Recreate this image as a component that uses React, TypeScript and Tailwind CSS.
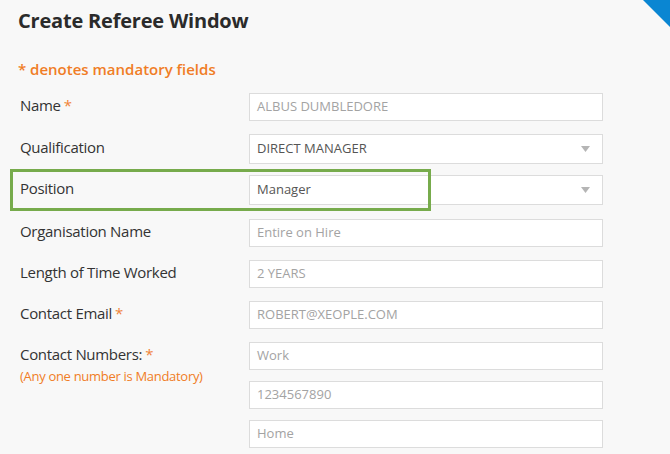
import React from "react";

const font = { fontFamily: '"Open Sans", "Liberation Sans", sans-serif' };

function Star() {
  return <span className="text-[#f0843a] ml-[3px]">*</span>;
}

function Field({ value, dark = false, select = false, tall = false }: { value: string; dark?: boolean; select?: boolean; tall?: boolean }) {
  return (
    <div
      className={`w-[354px] ${tall ? "h-[30px]" : "h-[28px]"} bg-white border border-[#dcdcdc] flex items-center justify-between pl-[7px] pr-[12px] text-[13px] ${dark ? "text-[#555555]" : "text-[#a3a3a3]"}`}
    >
      <span>{value}</span>
      {select && (
        <svg width="9" height="6" viewBox="0 0 9 6">
          <path d="M0 0 L9 0 L4.5 6 Z" fill="#b5b5b5" />
        </svg>
      )}
    </div>
  );
}

function Row({ label, star = false, children, className = "" }: { label: string; star?: boolean; children: React.ReactNode; className?: string }) {
  return (
    <div className={`flex items-center ${className}`}>
      <div className="w-[229px] text-[15px] text-[#333333] -mt-[4px] tracking-[-0.3px]">
        {label}
        {star && <Star />}
      </div>
      {children}
    </div>
  );
}

export default function App() {
  return (
    <div className="relative w-[670px] h-[454px] overflow-hidden bg-[#f8f8f8]" style={font}>
      <svg className="absolute top-0 right-0" width="28" height="28" viewBox="0 0 28 28">
        <path d="M1 0 L28 0 L28 27 Z" fill="#0a86d2" />
      </svg>
      <div className="pl-[18px] pt-[6px]">
        <h1 className="text-[20px] font-bold text-[#2b2b2b] leading-[30px] tracking-[-0.2px]">Create Referee Window</h1>
        <div className="mt-[22px] text-[15px] font-semibold text-[#f07d26] leading-[22px]">* denotes mandatory fields</div>
        <div className="pl-[2px] mt-[13px] flex flex-col">
          <Row label="Name" star>
            <Field value="ALBUS DUMBLEDORE" />
          </Row>
          <Row label="Qualification" className="mt-[13px]">
            <Field value="DIRECT MANAGER" dark select tall />
          </Row>
          <Row label="Position" className="mt-[11px]">
            <Field value="Manager" dark select tall />
          </Row>
          <Row label="Organisation Name" className="mt-[14px]">
            <Field value="Entire on Hire" />
          </Row>
          <Row label="Length of Time Worked" className="mt-[13px]">
            <Field value="2 YEARS" />
          </Row>
          <Row label="Contact Email" star className="mt-[13px]">
            <Field value="ROBERT@XEOPLE.COM" />
          </Row>
          <div className="flex mt-[13px]">
            <div className="w-[229px] pt-[1px]">
              <div className="text-[15px] text-[#333333] leading-[22px] tracking-[-0.3px]">
                Contact Numbers:
                <Star />
              </div>
              <div className="text-[13px] text-[#f07d26] leading-[18px] mt-[2px] tracking-[-0.3px]">(Any one number is Mandatory)</div>
            </div>
            <div className="flex flex-col gap-[11px]">
              <Field value="Work" />
              <Field value="1234567890" />
              <Field value="Home" />
            </div>
          </div>
        </div>
      </div>
      <div className="absolute left-[10px] top-[169px] w-[421px] h-[42px] border-[3px] border-[#77ab4c]" />
    </div>
  );
}
